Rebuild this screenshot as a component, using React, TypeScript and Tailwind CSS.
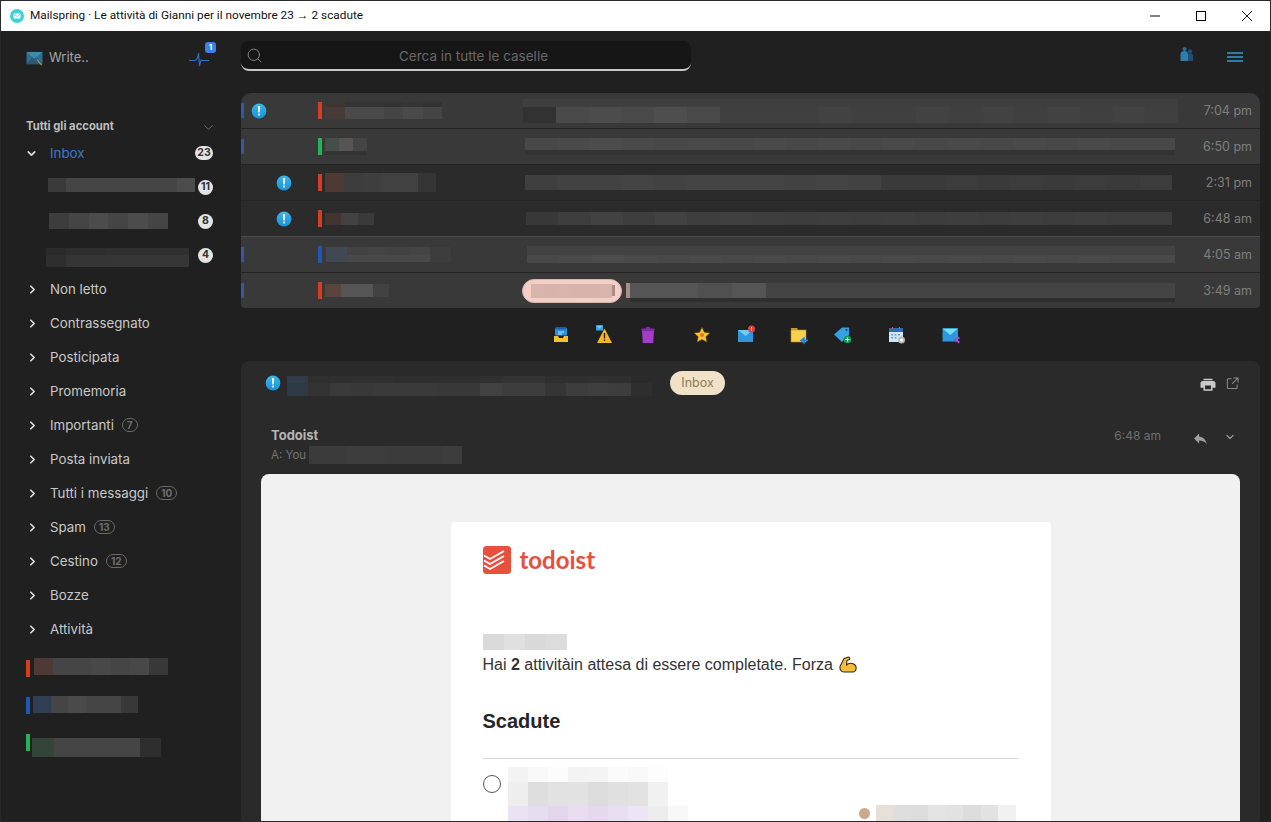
import React from "react";
import { ChevronRight, ChevronDown, Search } from "lucide-react";

type Row = [number, ...string[]];
function M({ w, rows, className = "" }: { w: number; rows: Row[]; className?: string }) {
  return (
    <div className={"flex flex-col shrink-0 " + className} style={{ width: w }}>
      {rows.map(([h, ...cells], i) => (
        <div key={i} className="flex" style={{ height: h }}>
          {cells.map((c, j) => (
            <div key={j} className="flex-1" style={{ background: c }} />
          ))}
        </div>
      ))}
    </div>
  );
}

function Bang({ className = "" }: { className?: string }) {
  return (
    <svg viewBox="0 0 16 16" className={"w-4 h-4 shrink-0 " + className}>
      <defs>
        <linearGradient id="bg1" x1="0" y1="0" x2="0" y2="1">
          <stop offset="0" stopColor="#3bb6ee" />
          <stop offset="1" stopColor="#1a93d6" />
        </linearGradient>
      </defs>
      <circle cx="8" cy="8" r="7.4" fill="url(#bg1)" />
      <path d="M6.9 3h2.2l-.4 6.4H7.3z" fill="#fff" />
      <circle cx="8" cy="11.5" r="1.1" fill="#fff" />
    </svg>
  );
}

function Chev({ open }: { open?: boolean }) {
  return open ? (
    <ChevronDown size={13} strokeWidth={3.2} className="text-[#dcdcdc]" />
  ) : (
    <ChevronRight size={13} strokeWidth={3.2} className="text-[#dcdcdc]" />
  );
}

function NavRow({ label, n }: { label: string; n?: string }) {
  return (
    <div className="h-[34px] flex items-center">
      <div className="w-[49px] pl-[25px] shrink-0 flex"><Chev /></div>
      <span className="text-[#c8c8c8] text-[13.3px] pt-[2px]">{label}</span>
      {n && (
        <span className="ml-[8px] h-[14px] min-w-[15px] px-[4px] rounded-full border border-[#6a6a6a] text-[#6e6e6e] text-[10px] font-bold flex items-center justify-center leading-none">
          {n}
        </span>
      )}
    </div>
  );
}

function SubRow({ ml, m, n }: { ml: string; m: React.ReactNode; n: string }) {
  return (
    <div className="h-[34px] flex items-center relative">
      <div className={ml}>{m}</div>
      <span className="absolute left-[197px] w-[15px] h-[15px] rounded-full bg-[#e4e4e4] text-[#333] text-[10.5px] font-bold flex items-center justify-center leading-none">
        {n}
      </span>
    </div>
  );
}

function Sidebar() {
  const g = "#454545";
  const g2 = "#4c4c4c";
  const d = "#2e2e2e";
  return (
    <aside className="w-[240px] shrink-0 flex flex-col">
      <div className="h-[53px] pl-[25px] pr-[32px] flex items-center pt-[1px]">
        <svg viewBox="0 0 18 16" className="w-[18px] h-[15px]">
          <rect x="0" y="1" width="17" height="13" fill="#2f6f92" />
          <path d="M0 1l8.5 7L17 1z" fill="#3d8cb0" />
          <path d="M0 14l6-7 2.5 2 2.5-2 6 7z" fill="#28587a" />
          <path d="M11 9l5 6" stroke="#b39a45" strokeWidth="1.2" />
        </svg>
        <span className="ml-[5px] text-[#a5a5a5] text-[13px]">Write..</span>
        <div className="ml-auto relative w-[20px] h-[16px] mt-[3px]">
          <svg viewBox="0 0 20 16" className="w-5 h-4">
            <path d="M0 8.500h5.500l1.500-.5 1.500-2L9.500 1l1 13 1.500-6 1 .5h7" fill="none" stroke="#2c6fd6" strokeWidth="1.1" />
          </svg>
          <span className="absolute -right-[7px] -top-[10px] w-[11px] h-[11px] rounded-[3px] bg-[#3f7fe6] text-white text-[8px] font-bold flex items-center justify-center leading-none">
            1
          </span>
        </div>
      </div>
      <div className="h-[55px] pl-[25px] pr-[25px] flex items-end justify-between pb-[8px] mt-[1px] leading-none">
        <span className="text-[#bdbdbd] text-[11.25px] font-bold">Tutti gli account</span>
        <ChevronDown size={15} strokeWidth={1.4} className="text-[#777] -mb-[3px]" />
      </div>
      <div className="h-[30px] flex items-center -mt-[2px] relative">
        <div className="w-[49px] pl-[24px] shrink-0 flex"><Chev open /></div>
        <span className="text-[#3f76c8] text-[13.3px] pt-[2px]">Inbox</span>
        <span className="absolute left-[194px] w-[18px] h-[14px] rounded-full bg-[#e4e4e4] text-[#333] text-[10.5px] font-bold flex items-center justify-center leading-none">
          23
        </span>
      </div>
      <div className="mt-[2px]">
        <SubRow ml="ml-[47px] -mt-[4px]" n="11" m={<M w={147} rows={[[14, "#3a3a3a", g, g, g, g, g, g, "#4c4c4c"]]} />} />
        <SubRow ml="ml-[48px]" n="8" m={<M w={119} rows={[[16, "#3d3d3d", g, g2, g, g2, g]]} />} />
        <SubRow ml="ml-[45px] mt-[5px]" n="4" m={<M w={143} rows={[[7, "#2a2a2a", d, d, "#303030", "#303030", "#303030", "#303030"], [12, d, "#353535", "#353535", "#363636", "#363636", "#363636", "#363636"]]} />} />
      </div>
      <NavRow label="Non letto" />
      <NavRow label="Contrassegnato" />
      <NavRow label="Posticipata" />
      <NavRow label="Promemoria" />
      <NavRow label="Importanti" n="7" />
      <NavRow label="Posta inviata" />
      <NavRow label="Tutti i messaggi" n="10" />
      <NavRow label="Spam" n="13" />
      <NavRow label="Cestino" n="12" />
      <NavRow label="Bozze" />
      <NavRow label="Attività" />
      <div className="pl-[25px] mt-[12px] flex flex-col">
        <div className="flex items-start h-[37px]">
          <div className="w-[4px] h-[17px] bg-[#d93c1f] mt-[2px]" />
          <M w={134} className="ml-[4px]" rows={[[17, "#4e3a35", g, g, "#484848", g, "#484848", "#383838"]]} />
        </div>
        <div className="flex items-start h-[37px]">
          <div className="w-[4px] h-[17px] bg-[#2057b0] mt-[2px]" />
          <M w={105} className="ml-[3px] mt-[1px]" rows={[[17, "#2f3e52", g, "#4a4a4a", g, g, "#383838"]]} />
        </div>
        <div className="flex items-start">
          <div className="w-[4px] h-[17px] bg-[#22b455] mt-[2px]" />
          <M w={129} className="ml-[2px] mt-[6px]" rows={[[19, "#334538", g, g, g, g, "#2e2e2e"]]} />
        </div>
      </div>
    </aside>
  );
}

const sub1 = ["#323232", "#4a4a4a", "#4c4c4c", "#4a4a4a", "#4e4e4e", "#4a4a4a", "#404040", "#404040", "#404040", "#424242", "#404040", "#404040", "#424242", "#404040", "#424242", "#404040", "#424242", "#404040", "#424242", "#404040"];
const sub = ["#484848", "#4a4a4a", "#4c4c4c", "#4a4a4a", "#484848", "#4a4a4a", "#484848", "#4a4a4a", "#484848", "#4a4a4a", "#484848", "#4a4a4a", "#484848", "#4a4a4a", "#484848", "#4a4a4a", "#484848", "#4a4a4a", "#484848", "#484848"];
const sub3 = ["#3f3f3f", "#424242", "#424242", "#444444", "#424242", "#444444", "#444444", "#444444", "#424242", "#444444", "#424242", "#3a3a3a", "#3a3a3a", "#3c3c3c", "#3a3a3a", "#3c3c3c", "#3a3a3a", "#3c3c3c", "#3a3a3a", "#3c3c3c"];
const sub4 = ["#383838", "#3e3e3e", "#424242", "#3e3e3e", "#424242", "#3e3e3e", "#404040", "#3e3e3e", "#3c3c3c", "#3e3e3e", "#3c3c3c", "#3e3e3e", "#3c3c3c", "#3e3e3e", "#3c3c3c", "#3e3e3e", "#3c3c3c", "#3e3e3e", "#3c3c3c", "#3c3c3c"];

function MailRow({
  dark, acc, bangAt, stripe, sender, subject, time, line = "border-[#242424]", pill,
}: {
  dark?: boolean; acc?: boolean; bangAt?: "a" | "b"; stripe: string;
  sender: React.ReactNode; subject: React.ReactNode; time: string; line?: string; pill?: boolean;
}) {
  return (
    <div className={`flex items-center shrink-0 ${dark ? "bg-[#2b2b2b]" : "bg-[#393939]"} ${pill ? "h-[35px]" : "h-[36px] border-b " + line}`}>
      <div className="w-[77px] shrink-0 flex items-center relative h-full">
        {acc && <div className="absolute left-0 w-[3px] h-[15px] bg-[#3059ab]" />}
        {bangAt === "a" && <Bang className="ml-[10px]" />}
        {bangAt === "b" && <Bang className="ml-[35px]" />}
      </div>
      <div className={`w-[4px] h-[17px] shrink-0 ${stripe}`} />
      <div className="w-[203px] pl-[3px] shrink-0">{sender}</div>
      {pill ? (
        <div className="flex items-center flex-1">
          <div className="-ml-[3px] w-[100px] h-[24px] rounded-full bg-[#f3cfc8] flex items-center shrink-0 border border-[#d9b4ab]">
            <M w={81} className="ml-[8px]" rows={[[14, "#d9b4ac", "#d8b3ab", "#d9b4ac", "#d8b3ab", "#d8b3ab", "#d9b4ac"]]} />
            <div className="w-[3px] h-[11px] bg-[#a98e88]" />
          </div>
          {subject}
        </div>
      ) : (
        subject
      )}
      <span className="ml-auto pr-[8px] pt-[2px] text-[#7f7f7f] text-[12.5px]">{time}</span>
    </div>
  );
}

const IconBox = ({ c, children }: { c?: string; children: React.ReactNode }) => (
  <svg viewBox="0 0 20 20" className={"w-5 h-5 shrink-0 " + (c ?? "")}>{children}</svg>
);

function Toolbar() {
  return (
    <div className="h-[53px] shrink-0 flex items-center pl-[310px]">
      <IconBox>
        <path d="M5 2.5h10l1 1v7H4v-7z" fill="#2b8fe0" /><path d="M5 2.5h10v2H5z" fill="#1e5fb0" />
        <path d="M7 7h6M7 9h4" stroke="#bfe3fa" strokeWidth="1" />
        <path d="M3 11h4l1 2h4l1-2h4v6H3z" fill="#f2c236" />
      </IconBox>
      <IconBox c="ml-[23px]">
        <path d="M2 0.5h7v5H2z" fill="#3aa4e6" />
        <path d="M2 .5l3.5 3 3.500-3z" fill="#7ccdf7" />
        <path d="M10.500 3.500l7.500 14.500H3z" fill="#f4b81c" />
        <path d="M9.800 8h1.400v5.500H9.800zM9.800 14.500h1.400V16H9.800z" fill="#222" />
      </IconBox>
      <IconBox c="ml-[24px]">
        <path d="M4 5h12l-.8 13H4.800z" fill="#a33cc9" />
        <path d="M3.500 3.500h13V6h-13z" fill="#7d2c9f" />
        <path d="M8 2h4v2H8z" fill="#7d2c9f" />
      </IconBox>
      <IconBox c="ml-[34px]">
        <path d="M10 2l2.400 5.200 5.600.7-4.100 3.800 1.100 5.600-5-2.800-5 2.800 1.100-5.600L2 7.900l5.600-.7z" fill="#f7c52c" stroke="#4a3a10" strokeWidth=".6" />
        <circle cx="10" cy="10" r="2" fill="#ef6a3a" />
      </IconBox>
      <IconBox c="ml-[24px]">
        <path d="M2 5h15v12H2z" fill="#2d97e2" />
        <path d="M2 5l7.500 6L17 5z" fill="#74cbf6" />
        <circle cx="15.500" cy="4" r="3.500" fill="#e53e3e" />
        <path d="M15.100 2h.8v2.500h-.8zM15.100 5h.8v1h-.8z" fill="#fff" />
      </IconBox>
      <IconBox c="ml-[33px]">
        <path d="M2 3h6l1 2H2z" fill="#d29a1e" />
        <path d="M2 5h15v12H2z" fill="#f7d04f" stroke="#b98a1c" strokeWidth=".6" />
        <path d="M19 15.500h-6M15 13l-3 2.500 3 2.500z" stroke="#2b7fd6" strokeWidth="1.500" fill="#2b7fd6" />
      </IconBox>
      <IconBox c="ml-[24px]">
        <path d="M1 9.500L9 2.500h7v7.500l-7 7z" fill="#35a0e6" />
        <circle cx="13.500" cy="5" r="1" fill="#13466e" />
        <circle cx="14.500" cy="14.500" r="3.800" fill="#0e9a55" />
        <path d="M14.500 12.500v4M12.500 14.500h4" stroke="#d6f5e2" strokeWidth="1.200" />
      </IconBox>
      <IconBox c="ml-[34px]">
        <path d="M2 4h14v13H2z" fill="#cfe7f7" />
        <path d="M2 3h14v4H2z" fill="#2c69ad" />
        <path d="M4 9h2v1.500H4zM7.500 9h2v1.500h-2zM11 9h2v1.500h-2zM4 12h2v1.500H4zM7.500 12h2v1.500h-2z" fill="#6aa1cd" />
        <path d="M5 2h1v2H5zM12 2h1v2h-1z" fill="#e25b4a" />
        <circle cx="14.500" cy="15" r="3.500" fill="#b8b8b8" />
        <circle cx="14.500" cy="15" r="1.500" fill="#fff" />
      </IconBox>
      <IconBox c="ml-[34px]">
        <path d="M1.500 3.500h15.500v13H1.500z" fill="#2d97e2" />
        <path d="M1.500 3.500l7.700 6.500L17 3.500z" fill="#6ee0f8" />
        <path d="M13.500 15l4-2M13.500 15l4 2" stroke="#a24ad0" strokeWidth="1.200" />
        <circle cx="17.500" cy="13" r="1.200" fill="#a24ad0" />
        <circle cx="17.500" cy="17" r="1.200" fill="#a24ad0" />
        <circle cx="13.500" cy="15" r="1.200" fill="#a24ad0" />
      </IconBox>
    </div>
  );
}

function Reader() {
  const c = "#3a3a3a";
  return (
    <section className="flex-1 min-h-0 bg-[#2a2a2a] rounded-t-[8px] flex flex-col overflow-hidden">
      <div className="h-[44px] shrink-0 flex items-center pl-[24px] pr-[21px] pt-[1px]">
        <Bang className="-mt-[1px]" />
        <M w={365} className="ml-[6px] mt-[4px]" rows={[[7, "#303d47", "#2f2f2f", "#2f2f2f", "#303030", "#303030", "#2f2f2f", "#2f2f2f", "#2f2f2f", "#2f2f2f", "#303030", "#333333", "#333333", "#2f2f2f", "#2f2f2f", "#303030", "#2f2f2f", "#2a2a2a"], [13, "#2d3a45", "#333333", c, "#383838", c, c, c, "#383838", "#383838", "#414141", "#3d3d3d", "#3d3d3d", "#353535", "#3d3d3d", "#3f3f3f", "#3d3d3d", "#2e2e2e"]]} />
        <span className="ml-[18px] w-[55px] h-[24px] rounded-full bg-[#f0e2c8] text-[#8f7a52] text-[12.5px] flex items-center justify-center -mt-[1px]">Inbox</span>
        <svg viewBox="0 0 24 24" className="ml-auto w-[18px] h-[18px] text-[#c9c9c9]" fill="currentColor">
          <path d="M19 8H5c-1.660 0-3 1.340-3 3v6h4v4h12v-4h4v-6c0-1.660-1.340-3-3-3zm-3 11H8v-5h8v5zm2-14H6v2h12V5z" />
        </svg>
        <svg viewBox="0 0 14 14" className="ml-[9px] w-[13px] h-[13px]" fill="none" stroke="#8a8a8a" strokeWidth="1.100">
          <path d="M6 2H2.500a1 1 0 00-1 1v8.500a1 1 0 001 1H11a1 1 0 001-1V8M8 1h5v5M13 1L6.500 7.500" />
        </svg>
      </div>
      <div className="h-[69px] shrink-0 pl-[30px] pr-[24px] flex justify-between relative">
        <div className="flex flex-col pt-[21px]">
          <span className="text-[#b4b4b4] text-[13px] font-bold leading-[18px]">Todoist</span>
          <div className="flex items-center leading-[18px] mt-[2px]">
            <span className="text-[#767676] text-[11.5px]">A: You</span>
            <M w={153} className="ml-[3px]" rows={[[18, "#3b3b3b", "#3b3b3b", "#3d3d3d", "#3d3d3d", "#3b3b3b", "#3b3b3b", "#3b3b3b", "#3d3d3d"]]} />
          </div>
        </div>
        <div className="flex items-start pt-[22px]">
          <span className="text-[#6e6e6e] text-[12px] leading-[18px]">6:48 am</span>
          <svg viewBox="0 0 24 24" className="ml-[31px] w-[17px] h-[17px] mt-[3px]" fill="#a0a0a0">
            <path d="M10 9V5l-7 7 7 7v-4.100c5 0 8.500 1.600 11 5.100-1-5-4-10-11-11z" />
          </svg>
          <ChevronDown size={12} strokeWidth={2.4} className="ml-[15px] mt-[4px] text-[#9a9a9a]" />
        </div>
      </div>
      <div className="flex-1 min-h-0 mx-[20px] bg-[#f1f1f1] rounded-t-[8px] overflow-hidden pt-[48px] flex justify-center">
        <div className="w-[600px] h-[400px] bg-white rounded-[4px] px-[32px] pt-[24px] shrink-0 font-['Liberation_Sans',sans-serif]">
          <div className="flex items-center h-[28px]">
            <svg viewBox="0 0 28 28" className="w-7 h-7">
              <rect width="28" height="28" rx="3.500" fill="#e6503c" />
              <path d="M0 9.500L6 13l14-8M0 14.500L6 18l14-8M0 19.500L6 23l14-8" stroke="#fff" strokeWidth="1.800" fill="none" transform="translate(1 0)" />
            </svg>
            <span className="ml-[9px] text-[#e6503c] text-[24px] font-bold font-['Lato',sans-serif]">todoist</span>
          </div>
          <M w={84} className="mt-[60px]" rows={[[16, "#dadada", "#e0e0e0", "#d9d9d9", "#dcdcdc"]]} />
          <p className="mt-[5px] text-[16px] text-[#333] leading-[20px] flex items-center">
            <span>Hai <b>2</b> attivitàin attesa di essere completate. Forza</span>
            <svg viewBox="0 0 20 18" className="ml-[5px] w-[20px] h-[18px]">
              <path d="M6 2.500L10.500 1c1.200.3 1.500 1.500 1 2.500L9 4.500 8.500 9c2-2 6-2.500 8.500 0 2 2 1.500 6-1.500 7H6C3 16 1.500 13 2 10.500z" fill="#f4bd3a" stroke="#3a2a10" strokeWidth="1.100" strokeLinejoin="round" />
            </svg>
          </p>
          <h2 className="mt-[34px] text-[20px] font-bold text-[#252525] leading-[24px]">Scadute</h2>
          <div className="mt-[25px] h-px bg-[#d8d8d8]" />
          <div className="flex mt-[8px] relative">
            <div className="w-[18px] h-[18px] mt-[8px] rounded-full border border-[#555] shrink-0" />
            <M w={180} className="ml-[7px]" rows={[[15, "#f3f3f3", "#f9f9f9", "#fcfcfc", "#f3f3f3", "#f4f4f4", "#fbfbfb", "#f9f9f9", "#fdfdfd", "#ffffff"], [24, "#eeeeee", "#dedede", "#e2e2e2", "#e2e2e2", "#dcdcdc", "#e0e0e0", "#e2e2e2", "#f1f1f1", "#ffffff"], [20, "#ebe2f3", "#e7ddf1", "#e3d5ec", "#e8ddf1", "#e5d8ef", "#e8dff2", "#ece5f5", "#ededed", "#f8f8f8"]]} />
            <div className="ml-auto self-end flex items-center mb-[5px] mr-[3px]">
              <div className="w-[11px] h-[11px] rounded-full bg-[#c9a88c]" />
              <M w={140} className="ml-[6px]" rows={[[16, "#e6e0d8", "#dedede", "#dcdcdc", "#e4e4e4", "#e2e2e2", "#dcdcdc", "#e2e2e2", "#f1f1f1"]]} />
            </div>
          </div>
        </div>
      </div>
    </section>
  );
}

export default function App() {
  const g = "#4a4a4a";
  const d = "#333333";
  return (
    <div className="w-[1271px] h-[822px] overflow-hidden flex flex-col bg-[#202020] border border-[#2a2a2a] font-['Inter',sans-serif]">
      <header className="h-[30px] shrink-0 bg-white flex items-center">
        <svg viewBox="0 0 14 14" className="ml-[9px] w-[14px] h-[14px]">
          <circle cx="7" cy="7" r="7" fill="#3fd0d8" />
          <rect x="3.500" y="4.500" width="7" height="5" rx=".8" fill="#fff" />
          <path d="M3.500 4.800L7 7.500l3.500-2.700" stroke="#3fd0d8" strokeWidth=".7" fill="none" />
        </svg>
        <span className="ml-[6px] text-[11.8px] text-[#111] font-['Roboto',sans-serif]">
          Mailspring · Le attività di Gianni per il novembre 23 → 2 scadute
        </span>
        <div className="ml-auto flex items-center">
          <svg viewBox="0 0 10 10" className="w-[10px] h-[10px] mr-[36px]"><path d="M0 5h10" stroke="#000" strokeWidth="1" /></svg>
          <svg viewBox="0 0 10 10" className="w-[10px] h-[10px] mr-[36px]"><rect x=".5" y=".5" width="9" height="9" fill="none" stroke="#000" strokeWidth="1" /></svg>
          <svg viewBox="0 0 10 10" className="w-[10px] h-[10px] mr-[18px]"><path d="M0 0l10 10M10 0L0 10" stroke="#000" strokeWidth=".9" /></svg>
        </div>
      </header>
      <div className="flex-1 min-h-0 flex">
        <Sidebar />
        <main className="flex-1 min-w-0 flex flex-col pr-[10px]">
          <div className="h-[62px] shrink-0 flex items-start pt-[10px]">
            <div className="w-[450px] h-[30px] bg-[#161616] rounded-[8px] border-b-2 border-[#c8c8c8] flex items-center relative">
              <Search size={17} strokeWidth={1.3} className="absolute left-[5px] text-[#8a8a8a]" />
              <span className="w-full text-center text-[13.5px] text-[#686868] pl-[15px] pt-[2px]">Cerca in tutte le caselle</span>
            </div>
            <div className="ml-auto flex items-center mr-[17px] mt-[5px]">
              <svg viewBox="0 0 16 16" className="w-[16px] h-[16px]">
                <circle cx="11" cy="5.500" r="2.200" fill="#1f4f74" />
                <path d="M8 15V9.500C8 8 9.500 7.500 11 7.500s3 .5 3 2V15z" fill="#1f4f74" />
                <circle cx="5.500" cy="3" r="2" fill="#2a6f9a" />
                <path d="M1.500 15V8c0-2 1.800-3 4-3s3.500 1 3.500 3v7z" fill="#2f7da8" />
              </svg>
              <div className="ml-[32px] w-[16px] flex flex-col gap-[2px] mt-[6px]">
                <div className="h-[2px] bg-[#2f7da3]" />
                <div className="h-[2px] bg-[#2f7da3]" />
                <div className="h-[2px] bg-[#2f7da3]" />
              </div>
            </div>
          </div>
          <div className="shrink-0 rounded-t-[10px] rounded-b-[4px] overflow-hidden flex flex-col">
            <MailRow acc bangAt="a" stripe="bg-[#d93c1f]" time="7:04 pm"
              sender={<M w={117} rows={[[5, "#3f3634", d, d, "#333", "#353535", "#333"], [12, "#473a37", g, g, "#454545", g, "#454545"]]} />}
              subject={<M w={655} className="-ml-[2px]" rows={[[8, ...sub1.map(() => "#3f3f3f")], [16, ...sub1]]} />} />
            <MailRow acc stripe="bg-[#22b455]" time="6:50 pm"
              sender={<M w={42} rows={[[13, "#445046", "#555", "#444"], [4, "#333", "#333", "#333"]]} />}
              subject={<M w={650} rows={[[12, ...sub], [5, ...sub.map(() => d)]]} />} />
            <MailRow dark stripe="bg-[#d93c1f]" bangAt="b" time="2:31 pm"
              sender={<M w={111} rows={[[19, "#4f3935", "#3c3c3c", "#3e3e3e", "#414141", "#414141", "#353535"]]} />}
              subject={<M w={647} rows={[[15, ...sub3]]} />} />
            <MailRow dark stripe="bg-[#d93c1f]" bangAt="b" time="6:48 am" line="border-[#4c4c4c]"
              sender={<M w={49} rows={[[12, "#443431", "#424242", "#3a3a3a"]]} />}
              subject={<M w={646} className="ml-[1px]" rows={[[13, ...sub4]]} />} />
            <MailRow acc stripe="bg-[#2057b0]" time="4:05 am"
              sender={<M w={125} className="ml-[1px]" rows={[[8, "#414853", "#424242", "#444", "#424242", "#444", "#3d3d3d"], [7, "#414853", "#484848", "#484848", "#484848", "#484848", "#3d3d3d"]]} />}
              subject={<M w={648} className="ml-[2px]" rows={[[9, ...sub.map(() => "#424242")], [8, ...sub]]} />} />
            <MailRow acc pill stripe="bg-[#d93c1f]" time="3:49 am"
              sender={<M w={64} rows={[[13, "#5b433e", "#555", "#555", "#424242"]]} />}
              subject={
                <div className="flex ml-[4px] -mb-[4px]">
                  <div className="w-[4px] flex flex-col">
                    <div className="h-[15px] bg-[#a98e88]" />
                  </div>
                  <M w={545} rows={[[15, "#555", "#555", "#505050", "#555", "#444", "#444", "#444", "#444", "#444", "#444", "#444", "#444", "#444", "#444", "#444", "#444"], [4, ...Array(16).fill("#2e2e2e")]]} />
                </div>
              } />
          </div>
          <Toolbar />
          <Reader />
        </main>
      </div>
    </div>
  );
}
